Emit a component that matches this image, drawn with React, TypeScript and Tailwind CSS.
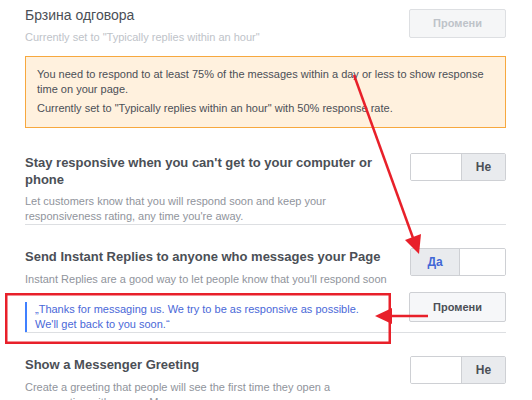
export default function App() {
  return (
    <div className="relative w-[532px] h-[400px] overflow-hidden bg-white font-['Liberation_Sans',Arial,sans-serif] text-[#4b4f56]">
      <div className="pl-[25px] pr-[26px]">
        {/* Section 1 */}
        <div className="flex items-start justify-between">
          <div className="pt-[6px]">
            <div className="text-[14px] leading-[18px]">Брзина одговора</div>
            <div className="mt-[6px] text-[11px] leading-[15px] text-[#bec3c9]">
              Currently set to "Typically replies within an hour"
            </div>
          </div>
          <button className="mt-[9px] h-[29px] w-[97px] rounded-[2px] border border-[#dddfe2] bg-[#f5f6f7] text-[11px] font-bold text-[#bec3c9]">
            Промени
          </button>
        </div>
        <div className="mt-[11px] border border-[#f7a83e] bg-[#fff1de] pb-[11px] pl-[11px] pr-[10px] pt-[10px] text-[11px] leading-[15px] text-[#4b4f56]">
          <p>
            You need to respond to at least 75% of the messages within a day or less to show response
            <br />
            time on your page.
          </p>
          <p className="mt-[4px]">Currently set to "Typically replies within an hour" with 50% response rate.</p>
        </div>

        {/* Section 2 */}
        <div className="mt-[25px] flex items-start justify-between border-b border-[#dddfe2]">
          <div className="w-[362px] pt-[1px]">
            <div className="text-[13px] font-bold leading-[17px]">
              Stay responsive when you can't get to your computer or phone
            </div>
            <div className="mt-[6px] text-[11px] leading-[15px] text-[#90949c]">
              Let customers know that you will respond soon and keep your responsiveness rating, any time you're away.
            </div>
          </div>
          <Toggle on={false} />
        </div>

        {/* Section 3 */}
        <div className="pt-[23px]">
          <div className="flex items-start justify-between">
            <div className="w-[362px]">
              <div className="text-[13px] font-bold leading-[17px]">
                Send Instant Replies to anyone who messages your Page
              </div>
              <div className="mt-[7px] text-[11px] leading-[15px] text-[#90949c]">
                Instant Replies are a good way to let people know that you'll respond soon
              </div>
            </div>
            <Toggle on={true} />
          </div>
          <div className="mt-[5px] flex items-start justify-between border-b border-[#dddfe2]">
            <div className="mt-[10px] w-[362px] border-l-[2px] border-[#4080ff] pl-[8px] text-[11px] leading-[15px] text-[#4a68d8]">
              „Thanks for messaging us. We try to be as responsive as possible.
              <br />
              We'll get back to you soon.“
            </div>
            <button className="h-[30px] w-[97px] rounded-[2px] border border-[#ced0d4] bg-[#f6f7f9] text-[11px] font-bold text-[#4b4f56]">
              Промени
            </button>
          </div>
        </div>

        {/* Section 4 */}
        <div className="flex items-start justify-between pt-[23px]">
          <div className="w-[362px]">
            <div className="text-[13px] font-bold leading-[17px]">Show a Messenger Greeting</div>
            <div className="mt-[7px] text-[11px] leading-[15px] text-[#90949c]">
              Create a greeting that people will see the first time they open a conversation with you on Messenger.
            </div>
          </div>
          <Toggle on={false} />
        </div>
      </div>

      {/* Annotations */}
      <svg className="pointer-events-none absolute left-0 top-0" width="532" height="400" viewBox="0 0 532 400">
        <rect x="6.25" y="294.25" width="383.5" height="48.5" fill="none" stroke="#e8202a" strokeWidth="2.5" />
        <line x1="354" y1="75" x2="413" y2="238" stroke="#e8202a" strokeWidth="2.5" />
        <polygon points="419,254 421,234 405,240" fill="#e8202a" />
        <line x1="428" y1="316" x2="390" y2="316" stroke="#e8202a" strokeWidth="2.5" />
        <polygon points="375,316 392,308 392,324" fill="#e8202a" />
      </svg>
    </div>
  );
}

function Toggle({ on }: { on: boolean }) {
  return (
    <div className="flex h-[28px] w-[96px] overflow-hidden rounded-[2px] border border-[#ced0d4]">
      {on ? (
        <>
          <div className="flex w-[48px] items-center justify-center bg-[#e9ebee] text-[12px] font-bold text-[#4267d6]">Да</div>
          <div className="flex-1 border-l border-[#ced0d4] bg-white" />
        </>
      ) : (
        <>
          <div className="w-[50px] bg-white" />
          <div className="flex flex-1 items-center justify-center border-l border-[#ced0d4] bg-[#e9ebee] text-[12px] font-bold text-[#4b4f56]">
            Не
          </div>
        </>
      )}
    </div>
  );
}
